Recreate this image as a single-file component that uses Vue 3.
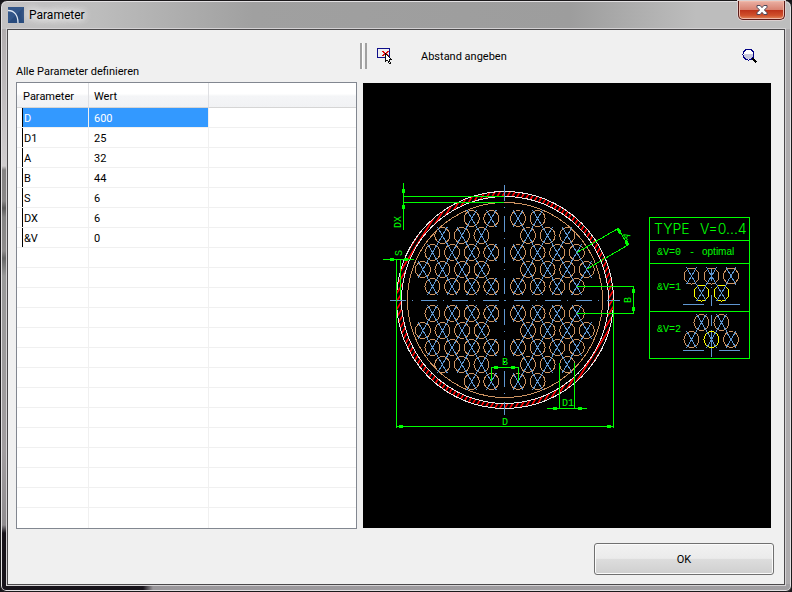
<script setup>
import { ref } from 'vue'

const parameters = [
  { name: 'D', value: '600' },
  { name: 'D1', value: '25' },
  { name: 'A', value: '32' },
  { name: 'B', value: '44' },
  { name: 'S', value: '6' },
  { name: 'DX', value: '6' },
  { name: '&V', value: '0' }
]
const emptyRows = 14
const selected = ref('D')

// Tube positions: one quadrant layout, mirrored below the horizontal axis.
const span = (start, count) => Array.from({ length: count }, (_, i) => start + i * 19.6)
const layout = [
  [...span(471.7, 2), ...span(518, 2)],
  [...span(442.3, 3), ...span(528, 3)],
  [...span(432.5, 4), ...span(518, 4)],
  [...span(422.9, 4), ...span(528, 4)],
  [...span(432.5, 4), ...span(518, 4)]
]
const tubes = layout.flatMap((xs, row) =>
  xs.flatMap((x) => [
    { x, y: 218.5 + row * 17 },
    { x, y: 381.5 - row * 17 }
  ])
)

const legendTubes = [
  { x: 691.5, y: 276 }, { x: 711.5, y: 276 }, { x: 731, y: 276 },
  { x: 701.5, y: 293, marked: true }, { x: 721.5, y: 293, marked: true },
  { x: 701.5, y: 322.5 }, { x: 721.5, y: 322.5 },
  { x: 691.5, y: 339.5 }, { x: 711.5, y: 339.5, marked: true }, { x: 731, y: 339.5 }
]

const arrows = [
  [402, 189, 3, 4], [402, 205, 3, 4],
  [390, 258, 4, 3], [404, 258, 4, 3],
  [494, 366, 4, 3], [511, 366, 4, 3],
  [399, 425, 4, 3], [607, 425, 4, 3],
  [553, 407, 4, 3], [578, 407, 4, 3],
  [632, 289, 3, 4], [632, 307, 3, 4]
]
</script>

<template>
  <div class="window">
    <header class="titlebar">
      <svg class="app-icon" viewBox="0 0 16 16" aria-hidden="true">
        <rect width="16" height="16" fill="#284a7c" />
        <path d="M0 16V0h16z" fill="#3d6296" opacity=".5" />
        <path d="M0 3.5C6 3.5 10 8 10 16" fill="none" stroke="#dfe8f4" stroke-width="1.3" />
      </svg>
      <h1 class="title">Parameter</h1>
      <button class="close" type="button" aria-label="Schließen">
        <svg viewBox="0 0 12 10" aria-hidden="true">
          <path d="M1 .5h3.2L6 2.7 7.8.5H11v1.8L8.4 5 11 7.7v1.8H7.8L6 7.3 4.2 9.5H1V7.7L3.6 5 1 2.3z" fill="#fff" stroke="#4e4a5c" />
        </svg>
      </button>
    </header>

    <main class="client">
      <div class="columns">
        <section class="side">
          <h2 class="caption">Alle Parameter definieren</h2>
          <div class="list">
            <table>
              <colgroup>
                <col class="col-name" />
                <col class="col-value" />
                <col />
              </colgroup>
              <thead>
                <tr>
                  <th scope="col">Parameter</th>
                  <th scope="col">Wert</th>
                  <th></th>
                </tr>
              </thead>
              <tbody>
                <tr
                  v-for="p in parameters"
                  :key="p.name"
                  :class="{ selected: selected === p.name }"
                  @click="selected = p.name"
                >
                  <td><span class="name">{{ p.name }}</span></td>
                  <td>{{ p.value }}</td>
                  <td></td>
                </tr>
                <tr v-for="n in emptyRows" :key="n">
                  <td></td>
                  <td></td>
                  <td></td>
                </tr>
              </tbody>
            </table>
          </div>
        </section>

        <section class="preview">
          <div class="toolbar">
            <span class="grip"></span>
            <button class="tool pick" type="button">
              <svg viewBox="0 0 16 17" shape-rendering="crispEdges" aria-hidden="true">
                <rect x=".5" y=".5" width="12" height="10" fill="none" stroke="#000084" />
                <path d="M5 3h2v1h1v1h1V4h1V3h2v1h-1v1h-1v1h1v1h1v1h-2V7H9V6H8v1H7v1H5V7h1V6h1V5H6V4H5z" fill="#e01010" />
                <path d="M8.5 5.5v9l2-2 1.5 3.5h2L12.5 12.5H15z" fill="#fff" stroke="#000" />
              </svg>
              <span class="tool-label">Abstand angeben</span>
            </button>
            <button class="tool" type="button" aria-label="Zoom">
              <svg viewBox="0 0 16 16" shape-rendering="crispEdges" aria-hidden="true">
                <circle cx="6.5" cy="6.5" r="5.5" fill="#fff" />
                <path d="M2 6h9v2l-2 3H4L2 8z" fill="#c8c8dc" />
                <circle cx="6.5" cy="6.5" r="5.5" fill="none" stroke="#000084" />
                <path d="M10.5 10.5l4 4" stroke="#000" stroke-width="2" />
              </svg>
            </button>
          </div>

          <svg class="drawing" viewBox="363 83 408 445" role="img" aria-label="Rohrspiegel">
            <defs>
              <pattern id="hatch" width="5" height="8" patternUnits="userSpaceOnUse">
                <path d="M-1 9.6L6 -1.6M-6 9.6L1 -1.6M4 9.6L11 -1.6" stroke="#f00" stroke-width="1.6" />
              </pattern>
            </defs>

            <g class="lines">
              <circle cx="505" cy="300" r="106" stroke="url(#hatch)" stroke-width="5" />
              <circle class="shell" cx="505" cy="300" r="108.5" />
              <circle class="shell" cx="505" cy="300" r="103.5" />
              <circle class="tan" cx="505" cy="300" r="97.5" />

              <g v-for="(t, i) in tubes" :key="i">
                <ellipse class="tan" :cx="t.x" :cy="t.y" rx="7.5" ry="8" />
                <path class="axis" :d="`M${t.x - 5} ${t.y - 8.5}l10 17m0 -17l-10 17`" />
              </g>

              <path class="axis chain" d="M389.5 300.5H620M504.5 185V415" />

              <g class="dim">
                <path d="M403.5 183V230M403 196.5H504M403 202.5H504" />
                <path d="M383 259.5H414M396.5 259V428M400.5 259V300" />
                <path d="M396 426.5H614M613.5 300V428" />
                <path d="M491 367.5H519M491.5 367V381M518.5 367V381" />
                <path d="M547 408.5H587M559.5 363V409M574.5 363V409" />
                <path d="M577 286.5H634M577 313.5H634M633.5 286V314" />
                <path d="M577 252.5L618 228.5L628 245L587 269" />
                <path d="M618 229l2.5 4M628 245l-2.5 -4" stroke-width="3" />
              </g>

              <g class="dim">
                <path d="M649.5 217.5h100v141h-100zM649.5 240.5h100M649.5 263.5h100M649.5 311.5h100" />
              </g>
              <path class="axis" d="M711.5 268V281M711.5 287v1M711.5 295V306M683 304.5H704M719 304.5H740" />
              <path class="axis" d="M711.5 315V326M711.5 330V357M683 350.5H704M719 350.5H740" />
              <g v-for="(t, i) in legendTubes" :key="`l${i}`">
                <ellipse :class="t.marked ? 'marked' : 'tan'" :cx="t.x" :cy="t.y" rx="7.5" ry="8" />
                <path class="axis" :d="`M${t.x - 5} ${t.y - 8.5}l10 17m0 -17l-10 17`" />
              </g>
            </g>

            <g class="fill">
              <rect v-for="(a, i) in arrows" :key="i" :x="a[0]" :y="a[1]" :width="a[2]" :height="a[3]" />
            </g>

            <g class="labels">
              <text transform="translate(401 222) rotate(-90)">DX</text>
              <text transform="translate(402 253) rotate(-90)">S</text>
              <text x="505" y="365">B</text>
              <text x="505" y="425">D</text>
              <text x="568" y="406">D1</text>
              <text transform="translate(631 300) rotate(-90)">B</text>
              <text transform="translate(629 238) rotate(-60)">A</text>
            </g>
            <g class="legend">
              <text class="large" x="654" y="234">TYPE</text>
              <text class="large" x="700" y="234">V=0...4</text>
              <text x="657" y="255">&amp;V=0</text>
              <text x="689" y="255">-</text>
              <text class="word" x="702" y="255">optimal</text>
              <text x="657" y="290">&amp;V=1</text>
              <text x="657" y="332">&amp;V=2</text>
            </g>
          </svg>
        </section>
      </div>

      <footer class="actions">
        <button class="ok" type="button">OK</button>
      </footer>
    </main>
  </div>
</template>

<style>
body {
  margin: 0;
  background: #18161a;
}
</style>

<style scoped>
* {
  box-sizing: border-box;
}

.window {
  display: flex;
  flex-direction: column;
  min-height: 100vh;
  padding: 0 6px 6px;
  border: 1px solid #1b191b;
  border-radius: 7px 7px 6px 6px;
  box-shadow: inset 0 0 0 1px #e2e0e2;
  color: #000;
  font-family: Roboto, "Liberation Sans", sans-serif;
  font-size: 11px;
  line-height: 14px;
  background:
    linear-gradient(90deg, #c4c2c3 0, #bdbdbd 12%, #a0a0a0 32%, #9d9d9d 72%, #bdbdbd 88%, #bdbdbd 100%) top / 100% 28px no-repeat,
    linear-gradient(90deg, #17131a 0, #17131a 142px, #9a979b 152px, #a19fa2 100%) bottom / 100% 7px no-repeat,
    linear-gradient(180deg, #aaa6a8 0, #d0cdce 165px, #858383 169px, #898787 200px, #5c5b5b 207px, #858484 216px, #8e8c8c 250px, #666 257px, #999 275px, #a19d9f 450px, #8f8c8f 524px, #17131a 532px) left / 8px 100% no-repeat,
    #adabad;
}

.titlebar {
  display: flex;
  align-items: center;
  height: 28px;
  padding-left: 1px;
}

.app-icon {
  width: 16px;
  height: 16px;
}

.title {
  flex: 1;
  margin: 0;
  padding-left: 5px;
  font-size: 12px;
  font-weight: 400;
  text-shadow: 0 0 8px #fff, 0 0 8px #fff, 0 0 12px #fff;
}

.close {
  display: flex;
  align-items: center;
  justify-content: center;
  align-self: flex-start;
  width: 47px;
  height: 19px;
  padding: 0;
  border: 1px solid #5b1b18;
  border-top: 0;
  border-radius: 0 0 5px 5px;
  box-shadow: inset 0 0 0 1px #f0b8a8, 0 0 0 1px #dcd0d0;
  background: linear-gradient(#eab0a4 0, #d98372 48%, #bd3219 50%, #d0502c 80%, #e08a5c 100%);
}

.close svg {
  width: 12px;
  height: 10px;
}

.client {
  flex: 1;
  padding: 0 13px 9px 8px;
  border: 1px solid #4b494b;
  box-shadow: 0 0 0 1px #d4d2d4;
  background: #f0f0f0;
}

.columns {
  display: grid;
  grid-template-columns: minmax(0, 341fr) minmax(0, 408fr);
  gap: 6px;
}

.caption {
  display: flex;
  align-items: flex-end;
  height: 52px;
  margin: 0;
  padding-bottom: 3px;
  font-size: 11px;
  font-weight: 400;
}

.list {
  border: 1px solid #828790;
  background: #fff;
}

table {
  width: 100%;
  border-collapse: separate;
  border-spacing: 0;
  table-layout: fixed;
}

.col-name {
  width: 72px;
}

.col-value {
  width: 120px;
}

th {
  height: 25px;
  padding: 4px 6px 0;
  border-right: 1px solid #dfe0e3;
  border-bottom: 1px solid #d5d5d5;
  background: linear-gradient(#fff 45%, #f4f5f7 55%, #f1f2f4);
  font-weight: 400;
  text-align: left;
}

td {
  height: 20px;
  padding: 2px 5px 0;
  border-right: 1px solid #f0f0f0;
  border-bottom: 1px solid #f0f0f0;
}

th:nth-child(2) {
  padding-left: 5px;
}

td:first-child {
  padding: 0 0 0 5px;
}

th:last-child,
td:last-child {
  border-right: 0;
}

tbody tr:last-child td {
  border-bottom: 0;
}

.name {
  display: block;
  height: 19px;
  padding-left: 1px;
  border-left: 1px solid #000;
  line-height: 21px;
}

.selected .name,
.selected td:nth-child(2) {
  background: #3399ff;
  color: #fff;
}

.toolbar {
  display: flex;
  align-items: center;
  height: 53px;
  margin-left: -3px;
  padding: 0 13px 2px 0;
}

.grip {
  width: 7px;
  height: 26px;
  margin-right: 10px;
  border: solid #a0a0a0;
  border-width: 0 2px;
  background: linear-gradient(90deg, #fff 1px, #f0f0f0 1px);
}

.tool {
  display: flex;
  align-items: center;
  padding: 0;
  border: 0;
  background: none;
  color: inherit;
  font: inherit;
}

.tool svg {
  width: 16px;
  height: 16px;
}

.tool-label {
  padding-top: 2px;
}

.pick {
  gap: 28px;
  margin-right: auto;
}

.drawing {
  display: block;
  width: 100%;
  background: #000;
}

.lines {
  fill: none;
  shape-rendering: crispEdges;
}

.shell {
  stroke: #e8e8e8;
}

.tan {
  stroke: #cd9462;
}

.marked {
  stroke: #ffff00;
}

.axis {
  stroke: #5f97d2;
}

.chain {
  stroke-dasharray: 16 6 1 8;
}

.dim {
  stroke: #00ff00;
}

.fill,
.labels,
.legend {
  fill: #00ff00;
}

.labels,
.legend {
  font-family: "Liberation Mono", monospace;
  font-size: 10px;
}

.labels {
  text-anchor: middle;
}

.legend .large {
  font-family: Inter, Roboto, sans-serif;
  font-size: 14px;
  font-weight: 300;
}

.legend .word {
  font-family: "Liberation Sans", sans-serif;
}

.actions {
  display: flex;
  justify-content: flex-end;
  margin-right: -3px;
  padding-top: 14px;
}

.ok {
  width: 180px;
  height: 32px;
  padding: 2px 0 0;
  border: 1px solid #707070;
  border-radius: 3px;
  box-shadow: inset 0 0 0 1px #fbfbfb;
  background: linear-gradient(#f2f2f2 0, #ebebeb 48%, #dddddd 50%, #cfcfcf 100%);
  color: #000;
  font: inherit;
}
</style>
